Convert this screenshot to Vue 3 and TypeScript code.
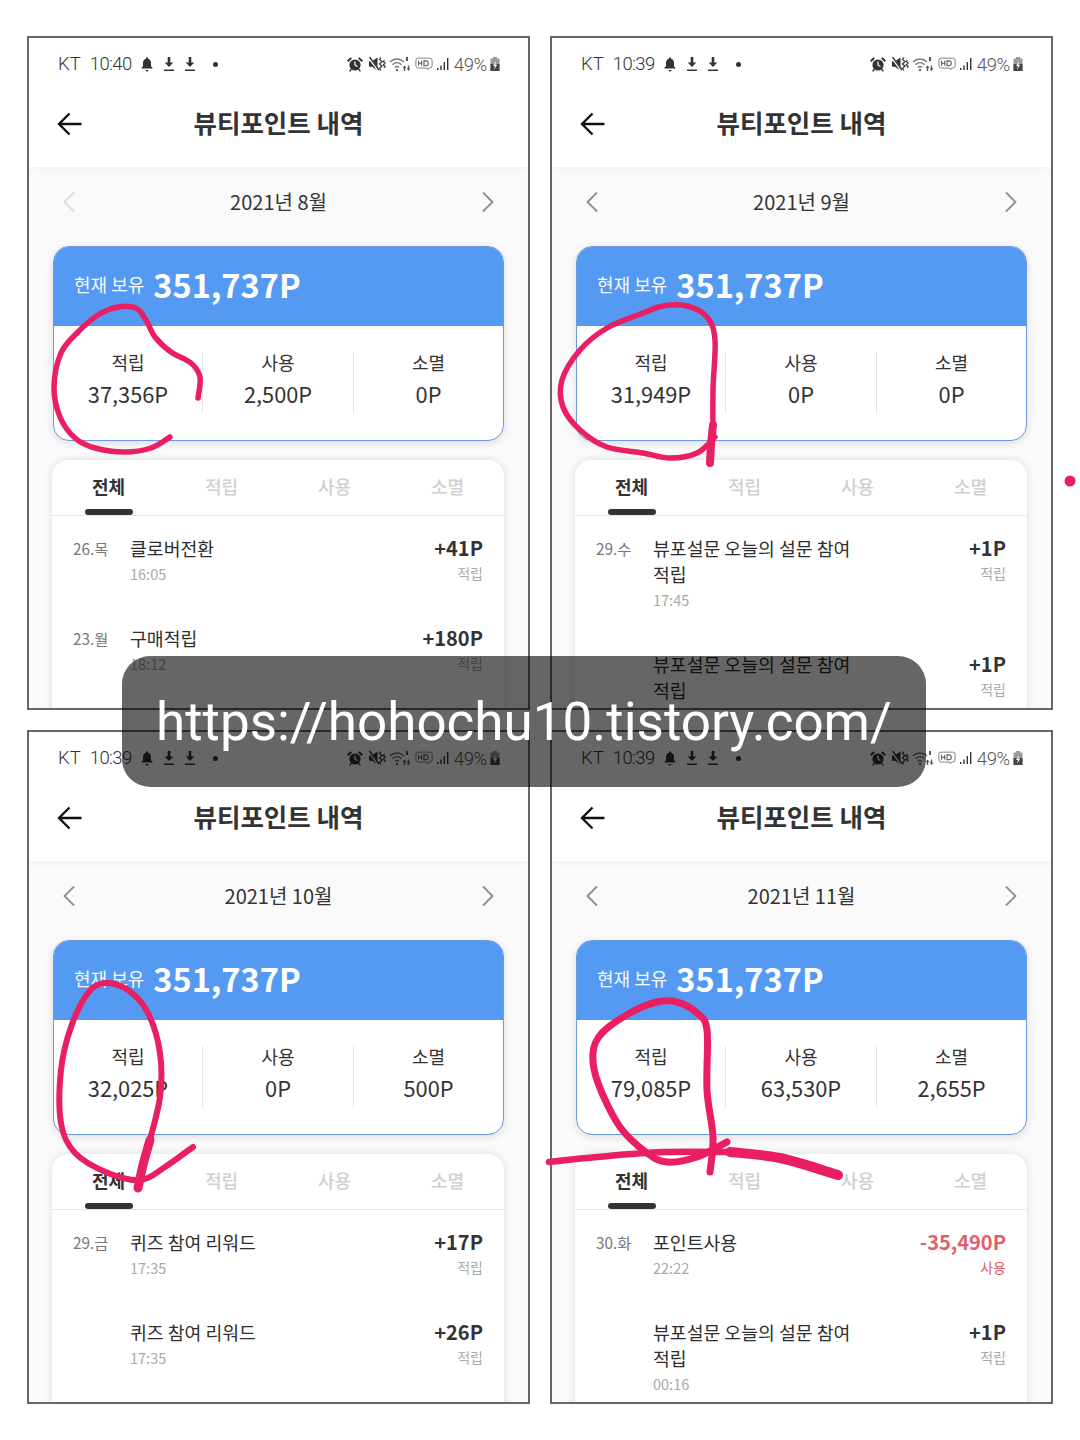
<script setup lang="ts">
type Row = { date: string; lines: string[]; time: string; amount: string; kind: string; used?: boolean }
type Panel = {
  clock: string; month: string; prevDim?: boolean
  stats: [string, string, string]; rows: Row[]
}

const panels: Panel[] = [
  {
    clock: '10:40', month: '2021년 8월', prevDim: true, stats: ['37,356P', '2,500P', '0P'],
    rows: [
      { date: '26.목', lines: ['클로버전환'], time: '16:05', amount: '+41P', kind: '적립' },
      { date: '23.월', lines: ['구매적립'], time: '18:12', amount: '+180P', kind: '적립' },
    ],
  },
  {
    clock: '10:39', month: '2021년 9월', stats: ['31,949P', '0P', '0P'],
    rows: [
      { date: '29.수', lines: ['뷰포설문 오늘의 설문 참여', '적립'], time: '17:45', amount: '+1P', kind: '적립' },
      { date: '', lines: ['뷰포설문 오늘의 설문 참여', '적립'], time: '', amount: '+1P', kind: '적립' },
    ],
  },
  {
    clock: '10:39', month: '2021년 10월', stats: ['32,025P', '0P', '500P'],
    rows: [
      { date: '29.금', lines: ['퀴즈 참여 리워드'], time: '17:35', amount: '+17P', kind: '적립' },
      { date: '', lines: ['퀴즈 참여 리워드'], time: '17:35', amount: '+26P', kind: '적립' },
    ],
  },
  {
    clock: '10:39', month: '2021년 11월', stats: ['79,085P', '63,530P', '2,655P'],
    rows: [
      { date: '30.화', lines: ['포인트사용'], time: '22:22', amount: '-35,490P', kind: '사용', used: true },
      { date: '', lines: ['뷰포설문 오늘의 설문 참여', '적립'], time: '00:16', amount: '+1P', kind: '적립' },
    ],
  },
]

const statLabels = ['적립', '사용', '소멸']
const tabs = ['전체', '적립', '사용', '소멸']

function smooth(p: number[][]): string {
  let d = `M${p[0][0]} ${p[0][1]}`
  for (let i = 0; i < p.length - 1; i++) {
    const a = p[Math.max(i - 1, 0)], b = p[i], c = p[i + 1], e = p[Math.min(i + 2, p.length - 1)]
    const c1x = b[0] + (c[0] - a[0]) / 6, c1y = b[1] + (c[1] - a[1]) / 6
    const c2x = c[0] - (e[0] - b[0]) / 6, c2y = c[1] - (e[1] - b[1]) / 6
    d += ` C${c1x.toFixed(1)} ${c1y.toFixed(1)} ${c2x.toFixed(1)} ${c2y.toFixed(1)} ${c[0]} ${c[1]}`
  }
  return d
}

const strokes = [
  { w: 5.5, pts: [[198,398],[200,377],[191,363],[171,352],[155,337],[146,320],[136,308],[118,307],[98,315],[78,332],[61,353],[54,387],[60,417],[75,438],[95,448],[125,452],[151,448],[170,437]] },
  { w: 5.5, pts: [[713,437],[713,390],[715,340],[707,317],[687,306],[663,306],[643,313],[607,328],[580,350],[562,380],[563,407],[580,430],[607,447],[643,453],[670,458],[697,453],[715,437]] },
  { w: 8, pts: [[710,463],[711,445],[713,425]] },
  { w: 6, pts: [[148,1147],[160,1097],[160,1053],[148,1013],[128,990],[105,983],[88,993],[71,1027],[61,1070],[61,1123],[75,1153],[108,1173],[141,1180],[165,1167],[193,1147]] },
  { w: 9, pts: [[138,1188],[143,1165],[150,1140]] },
  { w: 7, pts: [[710,1172],[713,1137],[707,1090],[707,1030],[697,1013],[677,1002],[657,1002],[630,1013],[602,1033],[593,1053],[598,1083],[620,1127],[647,1153],[667,1162],[697,1157],[727,1142]] },
  { w: 6.5, pts: [[549,1162],[597,1157],[663,1152],[730,1152]] },
  { w: 10, pts: [[730,1152],[780,1158],[838,1175]] },
].map((s) => ({ w: s.w, d: smooth(s.pts) }))
</script>

<template>
  <div class="page">
    <section v-for="(panel, pi) in panels" :key="pi" class="panel">
      <header class="top">
        <div class="status">
          <span class="carrier">KT</span>
          <span class="clock">{{ panel.clock }}</span>
          <svg class="ic bell" viewBox="0 0 14 16"><path d="M7 1.2a1 1 0 0 1 1 1v.6c2 .5 3 2.100 3 4.200v3.200l1.500 1.600v.7h-11v-.7L3 10.200V7c0-2.100 1-3.700 3-4.200v-.6a1 1 0 0 1 1-1ZM5.500 14h3a1.500 1.500 0 0 1-3 0Z" /></svg>
          <svg class="ic dl" viewBox="0 0 12 16"><path d="M4.700 1h2.600v5.600h3L6 11 1.700 6.600h3ZM1 13.400h10v1.500H1Z" /></svg>
          <svg class="ic dl" viewBox="0 0 12 16"><path d="M4.700 1h2.600v5.600h3L6 11 1.700 6.600h3ZM1 13.400h10v1.500H1Z" /></svg>
          <span class="dot"></span>
          <span class="grow"></span>
          <svg class="ic alarm" viewBox="0 0 18 16"><circle cx="9" cy="9" r="5.600" /><path d="M1 4.500 4.500 1.300 6 2.600 2.400 5.900ZM17 4.500 13.500 1.300 12 2.600 15.600 5.900ZM4.800 12.700 3 15l1.200.8 1.900-2.300ZM13.200 12.700 15 15l-1.200.8-1.900-2.300Z" /><path d="M9 5.500V9l2.500 1.500" stroke="#fff" stroke-width="1.200" fill="none" /></svg>
          <svg class="ic mute" viewBox="0 0 18 16"><path d="M1 5.200h3L9.500 1.500v13L4 10.800H1Z" /><path d="M1 1.500 10.500 14.500" stroke="#fff" stroke-width="2.400" /><path d="M1.500 1 11 14" stroke="#333" stroke-width="1.300" /><path d="M13 1.500l-1.500 2 2.500 2-2.500 2.500 2.500 2-2.500 2.500 1.500 2M16.500 4l-1.200 1.500 1.800 1.500-1.800 2 1.800 1.500-1.200 1.500" fill="none" stroke="#333" stroke-width="1.200" /></svg>
          <svg class="ic wifi" viewBox="0 0 22 16"><path d="M1 6c4-4 10-4 14 0M3.500 8.800c2.800-2.800 6.200-2.800 9 0M6 11.500c1.500-1.500 2.500-1.500 4 0" fill="none" stroke="#777" stroke-width="1.300" /><circle cx="8" cy="14" r="1.200" fill="#666" /><path d="M17 1h2v4h-2ZM15.500 9.500l2 2.500h-1.300v3h-1.400v-3h-1.300ZM19.500 15l-2-2.500h1.300v-3h1.400v3h1.300Z" fill="#555" /></svg>
          <svg class="ic hd" viewBox="0 0 20 16"><path d="M3.500 1.500h13a2.500 2.500 0 0 1 2.500 2.500v6a2.500 2.500 0 0 1-2.500 2.500H15l-1 2-1-2H3.500A2.500 2.500 0 0 1 1 10V4a2.500 2.500 0 0 1 2.500-2.500Z" fill="none" stroke="#777" stroke-width="1" /><path d="M4 4.500v5.400M7.500 4.500v5.400M4 7.200h3.500M10 4.500v5.400h2.200c3.400 0 3.400-5.400 0-5.400Z" fill="none" stroke="#555" stroke-width="1.200" /></svg>
          <svg class="ic signal" viewBox="0 0 14 16"><path d="M1 12h1.400v2H1ZM4.300 9.500h1.400V14H4.300ZM7.600 6h1.400v8H7.600ZM11 2h1.400v12H11Z" /></svg>
          <span class="batt-txt">49%</span>
          <svg class="ic batt" viewBox="0 0 12 16"><path d="M4 1h4v1.500h2.500V15h-9V2.500H4Z" fill="#9a9a9a" /><path d="M1.500 8h9v7h-9Z" fill="#444" /><path d="M7 5 4 10h2l-1 4 3.200-5.200H6.300Z" fill="#fff" /></svg>
        </div>
        <div class="bar">
          <svg class="back" viewBox="0 0 26 24"><path d="M24.500 12H2.500M12.500 1.500 2 12l10.500 10.500" fill="none" stroke="#111" stroke-width="2.400" /></svg>
          <h1>뷰티포인트 내역</h1>
        </div>
      </header>

      <div class="month">
        <svg class="chev" :class="{ dim: panel.prevDim }" viewBox="0 0 14 22"><path d="M12 1.500 2.500 11l9.500 9.500" /></svg>
        <strong>{{ panel.month }}</strong>
        <svg class="chev" viewBox="0 0 14 22"><path d="M2 1.500 11.500 11 2 20.500" /></svg>
      </div>

      <div class="balance">
        <div class="balance-head">
          <span class="cur">현재 보유</span>
          <b class="total">351,737P</b>
        </div>
        <div class="stats">
          <div v-for="(label, si) in statLabels" :key="label" class="stat">
            <span>{{ label }}</span>
            <em>{{ panel.stats[si] }}</em>
          </div>
        </div>
      </div>

      <div class="list">
        <div class="tabs">
          <span v-for="(tab, ti) in tabs" :key="tab" class="tab" :class="{ on: ti === 0 }">{{ tab }}</span>
        </div>
        <div v-for="(row, ri) in panel.rows" :key="ri" class="row">
          <span class="date">{{ row.date }}</span>
          <div class="info">
            <p v-for="line in row.lines" :key="line">{{ line }}</p>
            <small>{{ row.time }}</small>
          </div>
          <div class="amount" :class="{ used: row.used }">
            <b>{{ row.amount }}</b>
            <small>{{ row.kind }}</small>
          </div>
        </div>
      </div>
    </section>

    <svg class="ink" viewBox="0 0 1080 1440">
      <path v-for="(s, i) in strokes" :key="i" :d="s.d" :stroke-width="s.w" />
      <circle cx="1070" cy="481" r="5.500" />
    </svg>

    <div class="mark">https://hohochu10.tistory.com/</div>
  </div>
</template>

<style>
html, body { margin: 0; background: #fff; }
</style>

<style scoped>
.page {
  position: relative;
  width: 1080px;
  height: 1440px;
  box-sizing: border-box;
  padding: 36px 0 0 27px;
  display: grid;
  grid-template-columns: 503px 503px;
  grid-auto-rows: 674px;
  gap: 20px;
  align-content: start;
  font-family: "Noto Sans CJK KR", "Noto Sans", sans-serif;
  color: #333;
}
.panel {
  box-sizing: border-box;
  border: 2px solid #666;
  background: #fafafa;
  overflow: hidden;
}
.top { background: #fff; box-shadow: 0 2px 6px rgba(0, 0, 0, .04); }
.status {
  height: 52px;
  display: flex;
  align-items: center;
  padding: 0 27px 0 29px;
  font-family: Roboto, sans-serif;
  font-weight: 300;
  font-size: 18.5px;
  color: #333;
}
.carrier { font-size: 18.5px; margin-right: 9px; }
.clock { width: 50px; letter-spacing: -.6px; }
.ic { display: block; height: 16px; fill: #333; flex: none; }
.bell { width: 14px; }
.dl { width: 12px; margin-left: 9px; }
.dot { width: 5px; height: 5px; border-radius: 50%; background: #333; margin-left: 17px; }
.grow { flex: 1; }
.alarm { width: 18px; }
.mute { width: 18px; margin-left: 4px; }
.wifi { width: 22px; margin-left: 3px; }
.hd { width: 18px; margin-left: 4px; }
.signal { width: 14px; margin-left: 3px; }
.batt-txt { margin-left: 4px; font-size: 18.5px; line-height: 22px; padding-top: 1px; color: #555; letter-spacing: -.3px; }
.batt { width: 12px; margin-left: 2px; }

.bar {
  position: relative;
  height: 64px;
  padding-bottom: 13px;
  display: flex;
  align-items: center;
  justify-content: center;
}
.back { position: absolute; left: 28px; top: 22px; width: 26px; height: 24px; }
h1 { margin: 0; font-size: 25.5px; line-height: 34px; font-weight: 700; color: #333; }

.month {
  height: 70px;
  display: flex;
  align-items: center;
  justify-content: space-between;
  padding: 0 33px;
}
.month strong { font-size: 20px; font-weight: 400; color: #333; line-height: 28px; }
.chev { width: 14px; height: 22px; fill: none; stroke: #8e8e8e; stroke-width: 1.800; }
.chev.dim { stroke: #dcdcdc; }

.balance {
  height: 195px;
  box-sizing: border-box;
  margin: 9px 24px 0;
  background: #fff;
  border: 1px solid #6b9bdc;
  border-radius: 16px;
  box-shadow: 0 2px 8px rgba(0, 0, 0, .12);
  overflow: hidden;
}
.balance-head {
  height: 73px;
  padding-bottom: 6px;
  background: #559af2;
  display: flex;
  align-items: center;
  gap: 9px;
  padding-left: 20px;
  color: #fff;
}
.cur { font-size: 18px; line-height: 26px; opacity: .95; }
.total { font-size: 32.5px; line-height: 46px; font-weight: 700; }
.stats { display: grid; grid-template-columns: 148px 151px 1fr; padding-top: 26px; }
.stat {
  height: 62px;
  display: flex;
  flex-direction: column;
  align-items: center;
  border-left: 1px solid #e6e6e6;
}
.stat:first-child { border-left: 0; }
.stat span { font-size: 18px; line-height: 20px; color: #333; }
.stat em { margin-top: 6px; font-style: normal; font-size: 21.800px; line-height: 32px; color: #333; }

.list {
  height: 300px;
  margin: 19px 24px 0 23px;
  background: #fff;
  border-radius: 16px 16px 0 0;
  box-shadow: 0 0 8px rgba(0, 0, 0, .12);
}
.tabs {
  height: 55px;
  display: grid;
  grid-template-columns: repeat(4, 113px);
  border-bottom: 1px solid #e6e6e6;
}
.tab {
  position: relative;
  text-align: center;
  font-size: 18px;
  line-height: 53px;
  font-weight: 500;
  color: #cfcfcf;
}
.tab.on { color: #333; font-weight: 700; }
.tab.on::after {
  content: "";
  position: absolute;
  left: 33px;
  bottom: 0;
  width: 48px;
  height: 6px;
  border-radius: 3px;
  background: #333;
}
.row { display: flex; padding: 19px 21px; }
.date { width: 57px; flex: none; font-size: 15.300px; line-height: 26px; color: #777; }
.info { flex: 1; }
.info p { margin: 0; font-size: 18.300px; line-height: 26px; color: #2e2e2e; }
.info small { display: block; font-size: 14.500px; line-height: 26px; color: #a8a8a8; }
.amount { text-align: right; }
.amount b { display: block; font-size: 20px; line-height: 26px; font-weight: 700; color: #333; }
.amount small { display: block; font-size: 14px; line-height: 24px; color: #aaa; }
.amount.used b { color: #e0606a; }
.amount.used small { color: #e0606a; }

.ink {
  position: absolute;
  left: 0;
  top: 0;
  width: 1080px;
  height: 1440px;
  pointer-events: none;
  fill: none;
  stroke: #e91e63;
  stroke-linecap: round;
  stroke-linejoin: round;
}
.ink circle { fill: #e91e63; stroke: none; }
.mark {
  position: absolute;
  left: 122px;
  top: 656px;
  width: 804px;
  height: 131px;
  border-radius: 28px;
  background: rgba(0, 0, 0, .6);
  display: flex;
  align-items: center;
  justify-content: center;
  font-family: Roboto, sans-serif;
  font-size: 53px;
  color: #fff;
}
</style>
